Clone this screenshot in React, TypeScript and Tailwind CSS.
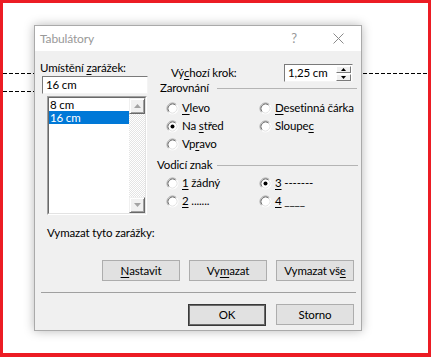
import React from "react";

function Radio({ checked }: { checked?: boolean }) {
  return (
    <svg width="13" height="13" viewBox="0 0 13 13" className="shrink-0">
      <circle cx="6.5" cy="6.5" r="5.5" fill="#fff" />
      <path d="M2.61 10.39 A5.5 5.5 0 0 1 10.39 2.61" stroke="#a0a0a0" fill="none" />
      <path d="M3.32 9.68 A4.5 4.5 0 0 1 9.68 3.32" stroke="#696969" fill="none" />
      <path d="M10.39 2.61 A5.5 5.5 0 0 1 2.61 10.39" stroke="#ffffff" fill="none" />
      <path d="M9.68 3.32 A4.5 4.5 0 0 1 3.32 9.68" stroke="#e3e3e3" fill="none" />
      {checked && <circle cx="6.5" cy="6.5" r="2" fill="#000" />}
    </svg>
  );
}

function RadioItem({ checked, children, w }: { checked?: boolean; children: React.ReactNode; w?: string }) {
  return (
    <div className={"flex h-[18px] items-center gap-[3px] whitespace-nowrap " + (w ?? "")}>
      <Radio checked={checked} />
      <span className="leading-[18px]">{children}</span>
    </div>
  );
}

function Btn({ children, def }: { children: React.ReactNode; def?: boolean }) {
  return (
    <div
      className={
        "flex w-[78px] items-center justify-center whitespace-nowrap bg-[#e1e1e1] " +
        (def ? "h-[22px] border border-[#3a3a3a] shadow-[inset_0_0_0_1px_#6a6a6a]" : "h-[21px] border border-[#adadad]")
      }
    >
      {children}
    </div>
  );
}

function Arrow({ up }: { up?: boolean }) {
  return (
    <svg width="7" height="4" viewBox="0 0 7 4">
      {up ? <path d="M0 4 L3.5 0 L7 4 Z" fill="#a3a3a3" /> : <path d="M0 0 L3.5 4 L7 0 Z" fill="#a3a3a3" />}
    </svg>
  );
}

function SpinArrow({ up }: { up?: boolean }) {
  return (
    <svg width="5" height="3" viewBox="0 0 5 3">
      {up ? <path d="M0 3 L2.5 0 L5 3 Z" fill="#000" /> : <path d="M0 0 L2.5 3 L5 0 Z" fill="#000" />}
    </svg>
  );
}

export default function App() {
  const u = (s: string) => <span className="underline underline-offset-[2px]">{s}</span>;
  return (
    <div
      className="relative h-[357px] w-[431px] overflow-hidden border-[3px] border-b-[4px] border-[#ec1c24] bg-white text-[11.5px] tracking-[-0.15px] text-black"
      style={{ fontFamily: "Lato, 'Noto Sans', sans-serif" }}
    >
      {/* dashed guide lines */}
      <div className="absolute left-0 right-0 top-[70px] h-px bg-[repeating-linear-gradient(90deg,#000_0px,#000_4px,transparent_4px,transparent_6px)]" />
      <div className="absolute left-0 top-[88px] h-px w-[200px] bg-[repeating-linear-gradient(90deg,#000_0px,#000_4px,transparent_4px,transparent_6px)]" />

      <div className="relative ml-[31px] mt-[22px] flex h-[306px] w-[328px] flex-col border border-[#aaaaaa] bg-white shadow-[0_0_10px_rgba(0,0,0,0.28)]">
        {/* title bar */}
        <div className="flex h-[25px] items-center bg-white pl-[5px] pr-[17px] text-[#999999]">
          <span className="text-[12px]">Tabulátory</span>
          <span className="ml-auto mr-[36px] text-[13px]">?</span>
          <svg width="11" height="11" viewBox="0 0 11 11">
            <path d="M0.5 0.5 L10.5 10.5 M10.5 0.5 L0.5 10.5" stroke="#8a8a8a" strokeWidth="1" />
          </svg>
        </div>

        {/* body */}
        <div className="flex flex-1 flex-col bg-[#f0f0f0]">
          <div className="flex">
            {/* left column */}
            <div className="ml-[5px] flex w-[108px] flex-col pt-[9px]">
              <div className="h-[16px] whitespace-nowrap leading-[16px]">Umístění {u("z")}arážek:</div>
              <div className="ml-[2px] h-[18px] w-[106px] border border-t-[#7a7a7a] border-l-[#7a7a7a] border-r-[#f4f4f4] border-b-[#f4f4f4] bg-white pl-[3px] leading-[16px]">
                16 cm
              </div>
              <div className="ml-[7px] mt-[2px] flex h-[119px] w-[100px] border border-t-[#a0a0a0] border-l-[#a0a0a0] border-r-white border-b-white">
                <div className="flex flex-1 border border-t-[#696969] border-l-[#696969] border-r-[#e3e3e3] border-b-[#e3e3e3] bg-white">
                  <div className="flex flex-1 flex-col">
                    <div className="h-[13px] pl-[1px] leading-[13px]">8 cm</div>
                    <div className="h-[13px] bg-[#0078d7] pl-[1px] leading-[13px] text-white">16 cm</div>
                  </div>
                  <div className="flex w-[16px] flex-col bg-[repeating-conic-gradient(#ffffff_0%_25%,#e4e4e4_0%_50%)] bg-[length:2px_2px]">
                    <div className="flex h-[16px] items-center justify-center border border-t-[#f0f0f0] border-l-[#f0f0f0] border-r-[#696969] border-b-[#696969] bg-[#f0f0f0] shadow-[inset_1px_1px_0_#fff,inset_-1px_-1px_0_#a0a0a0]">
                      <Arrow up />
                    </div>
                    <div className="flex-1" />
                    <div className="flex h-[16px] items-center justify-center border border-t-[#f0f0f0] border-l-[#f0f0f0] border-r-[#696969] border-b-[#696969] bg-[#f0f0f0] shadow-[inset_1px_1px_0_#fff,inset_-1px_-1px_0_#a0a0a0]">
                      <Arrow />
                    </div>
                  </div>
                </div>
              </div>
            </div>

            {/* right column */}
            <div className="ml-[9px] flex w-[201px] flex-col">
              <div className="mt-[13px] flex h-[18px] items-center justify-between pl-[14px] pr-[5px]">
                <span className="whitespace-nowrap leading-[18px]">Vý{u("c")}hozí krok:</span>
                <div className="flex h-[18px] w-[69px] items-center border border-t-[#7a7a7a] border-l-[#7a7a7a] border-r-[#f4f4f4] border-b-[#f4f4f4] bg-white pl-[3px]">
                  <span className="flex-1 whitespace-nowrap leading-[16px]">1,25 cm</span>
                  <div className="mr-[1px] flex h-[15px] w-[15px] flex-col">
                    <div className="flex h-[7px] items-center justify-center border border-t-white border-l-white border-r-[#7a7a7a] border-b-[#7a7a7a] bg-[#f0f0f0]">
                      <SpinArrow up />
                    </div>
                    <div className="h-px" />
                    <div className="flex h-[7px] items-center justify-center border border-t-white border-l-white border-r-[#7a7a7a] border-b-[#7a7a7a] bg-[#f0f0f0]">
                      <SpinArrow />
                    </div>
                  </div>
                </div>
              </div>

              <div className="flex h-[12px] items-center pl-[3px] pr-[1px]">
                <span className="w-[57px] whitespace-nowrap leading-[12px]">Zarovnání</span>
                <div className="h-px flex-1 bg-[#b4b4b4]" />
              </div>

              <div className="mt-[5px] flex flex-col pl-[9px]">
                <div className="flex">
                  <RadioItem w="w-[93px]">{u("V")}levo</RadioItem>
                  <RadioItem>{u("D")}esetinná čárka</RadioItem>
                </div>
                <div className="flex">
                  <RadioItem w="w-[93px]" checked>
                    Na {u("s")}třed
                  </RadioItem>
                  <RadioItem>Sloupe{u("c")}</RadioItem>
                </div>
                <div className="flex">
                  <RadioItem w="w-[93px]">Vp{u("r")}avo</RadioItem>
                </div>
              </div>

              <div className="mt-[6px] flex h-[12px] items-center pr-0">
                <span className="w-[60px] whitespace-nowrap leading-[12px]">Vodicí znak</span>
                <div className="h-px flex-1 bg-[#b4b4b4]" />
              </div>

              <div className="mt-[3px] flex flex-col pl-[9px]">
                <div className="flex">
                  <RadioItem w="w-[93px]">
                    {u("1")} žádný
                  </RadioItem>
                  <RadioItem checked>
                    {u("3")} -------
                  </RadioItem>
                </div>
                <div className="flex">
                  <RadioItem w="w-[93px]">
                    {u("2")} .......
                  </RadioItem>
                  <RadioItem>
                    {u("4")} ____
                  </RadioItem>
                </div>
              </div>
            </div>
          </div>

          <div className="ml-[12px] mt-[10px] h-[16px] whitespace-nowrap leading-[16px]">Vymazat tyto zarážky:</div>

          <div className="mr-[7px] mt-[19px] flex justify-end gap-[9px]">
            <Btn>{u("N")}astavit</Btn>
            <Btn>Vy{u("m")}azat</Btn>
            <Btn>Vymazat vš{u("e")}</Btn>
          </div>

          <div className="ml-[6px] mr-[5px] mt-[11px] h-px bg-[#a0a0a0]" />

          <div className="mr-[7px] mt-[11px] flex justify-end gap-[10px]">
            <Btn def>OK</Btn>
            <Btn>Storno</Btn>
          </div>
        </div>
      </div>
    </div>
  );
}
